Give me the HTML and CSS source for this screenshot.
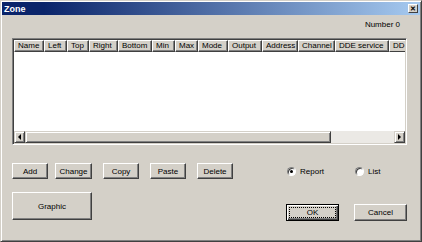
FILE: index.html
```html
<!DOCTYPE html>
<html lang="en">
<head>
    <meta charset="UTF-8">
    <title>Zone</title>
    <link rel="stylesheet" href="styles.css">
</head>
<body>
    <div class="window">
        <div class="titlebar">
            <span class="title">Zone</span>
            <span class="close-btn">&#x2715;</span>
        </div>

        <div class="number-row">Number 0</div>

        <!-- Zone list -->
        <div class="listview">
            <div class="list-header">
                <span class="col" style="width:30px">Name</span>
                <span class="col" style="width:23px">Left</span>
                <span class="col" style="width:22px">Top</span>
                <span class="col" style="width:29px">Right</span>
                <span class="col" style="width:34px">Bottom</span>
                <span class="col" style="width:23px">Min</span>
                <span class="col" style="width:23px">Max</span>
                <span class="col" style="width:30px">Mode</span>
                <span class="col" style="width:34px">Output</span>
                <span class="col" style="width:36px">Address</span>
                <span class="col" style="width:37px">Channel</span>
                <span class="col" style="width:54px">DDE service</span>
                <span class="col col-last">DD</span>
            </div>
            <div class="list-body"></div>
            <div class="hscroll">
                <span class="scroll-btn"><span class="arrow-left"></span></span>
                <span class="scroll-thumb"></span>
                <span class="scroll-track"></span>
                <span class="scroll-btn"><span class="arrow-right"></span></span>
            </div>
        </div>

        <div class="action-row">
            <button class="btn btn-small btn-add">Add</button>
            <button class="btn btn-small btn-change">Change</button>
            <button class="btn btn-small">Copy</button>
            <button class="btn btn-small">Paste</button>
            <button class="btn btn-small">Delete</button>

            <label class="radio radio-report"><span class="radio-dot checked"></span>Report</label>
            <label class="radio"><span class="radio-dot"></span>List</label>
        </div>

        <div class="bottom-row">
            <button class="btn btn-graphic">Graphic</button>
            <button class="btn btn-dialog btn-default"><span class="focus">OK</span></button>
            <button class="btn btn-dialog btn-cancel">Cancel</button>
        </div>
    </div>
</body>
</html>
```

FILE: styles.css
```css
body {
    margin: 0;
    font-family: 'Liberation Sans', Arial, sans-serif;
    font-size: 8px;
    color: #000;
}
.window {
    width: 422px;
    height: 242px;
    box-sizing: border-box;
    background: #d4d0c8;
    border: 1px solid;
    border-color: #d4d0c8 #404040 #404040 #d4d0c8;
    box-shadow: inset 1px 1px #ffffff, inset -1px -1px #808080;
    padding: 1px;
    display: flex;
    flex-direction: column;
}
.titlebar {
    height: 13px;
    display: flex;
    align-items: center;
    padding: 0 2px 0 2px;
    background: linear-gradient(to right, #0a246a 10%, #a6caf0);
}
.title {
    color: #fff;
    font-weight: bold;
    font-size: 9px;
}
.close-btn {
    margin-left: auto;
    width: 10px;
    height: 9px;
    box-sizing: border-box;
    background: #d4d0c8;
    border: 1px solid;
    border-color: #fff #404040 #404040 #fff;
    font-size: 7px;
    font-weight: bold;
    line-height: 7px;
    text-align: center;
}
.number-row {
    margin-top: 5px;
    height: 10px;
    line-height: 10px;
    text-align: right;
    padding-right: 20px;
}
.listview {
    margin: 8px 0 0 10px;
    width: 395px;
    height: 107px;
    box-sizing: border-box;
    border: 1px solid;
    border-color: #808080 #fff #fff #808080;
    box-shadow: inset 1px 1px #404040, inset -1px -1px #d4d0c8;
    padding: 1px;
    display: flex;
    flex-direction: column;
    background: #fff;
}
.list-header {
    height: 12px;
    display: flex;
    overflow: hidden;
    flex-shrink: 0;
}
.col {
    flex-shrink: 0;
    box-sizing: border-box;
    height: 12px;
    line-height: 10px;
    padding-left: 3px;
    white-space: nowrap;
    overflow: hidden;
    background: #d4d0c8;
    border: 1px solid;
    border-color: #fff #404040 #404040 #fff;
    box-shadow: inset -1px -1px #808080;
}
.col-last {
    flex: 1;
    border-right: none;
    box-shadow: none;
}
.list-body {
    flex: 1;
}
.hscroll {
    height: 12px;
    display: flex;
    flex-shrink: 0;
}
.scroll-btn,
.scroll-thumb {
    box-sizing: border-box;
    height: 12px;
    background: #d4d0c8;
    border: 1px solid;
    border-color: #d4d0c8 #404040 #404040 #d4d0c8;
    box-shadow: inset 1px 1px #fff, inset -1px -1px #808080;
}
.scroll-btn {
    width: 11px;
    display: flex;
    align-items: center;
    justify-content: center;
}
.scroll-thumb {
    width: 306px;
}
.scroll-track {
    flex: 1;
    background: #ebe9e5;
}
.arrow-left {
    border-top: 3px solid transparent;
    border-bottom: 3px solid transparent;
    border-right: 3px solid #000;
}
.arrow-right {
    border-top: 3px solid transparent;
    border-bottom: 3px solid transparent;
    border-left: 3px solid #000;
}
.btn {
    font-family: inherit;
    font-size: 8px;
    color: #000;
    padding: 0;
    flex-shrink: 0;
    box-sizing: border-box;
    background: #d4d0c8;
    border: 1px solid;
    border-color: #fff #404040 #404040 #fff;
    box-shadow: inset -1px -1px #808080;
}
.action-row {
    margin: 18px 0 0 10px;
    height: 16px;
    display: flex;
    align-items: center;
    gap: 11px;
}
.btn-small {
    width: 36px;
    height: 16px;
}
.btn-add {
    margin-right: -4px;
}
.btn-change {
    width: 37px;
}
.radio {
    display: flex;
    align-items: center;
    flex-shrink: 0;
    gap: 4px;
}
.radio-report {
    width: 57px;
    margin-left: 43px;
}
.radio-dot {
    width: 9px;
    height: 9px;
    box-sizing: border-box;
    border-radius: 50%;
    border: 1px solid;
    border-color: #808080 #fff #fff #808080;
    box-shadow: inset 1px 1px #404040;
    background: #fff;
    display: flex;
    align-items: center;
    justify-content: center;
}
.radio-dot.checked::after {
    content: "";
    width: 3px;
    height: 3px;
    border-radius: 50%;
    background: #000;
}
.bottom-row {
    margin: 13px 0 0 10px;
    padding-right: 13px;
    display: flex;
    align-items: flex-start;
}
.btn-graphic {
    width: 80px;
    height: 28px;
}
.btn-dialog {
    width: 53px;
    height: 17px;
    margin-top: 12px;
}
.btn-default {
    margin-left: auto;
    border: 1px solid #000;
    box-shadow: inset 1px 1px #fff, inset -1px -1px #404040, inset -2px -2px #808080;
    padding: 2px;
}
.focus {
    display: block;
    height: 100%;
    box-sizing: border-box;
    border: 1px dotted #000;
    line-height: 9px;
}
.btn-cancel {
    margin-left: 15px;
}
```
